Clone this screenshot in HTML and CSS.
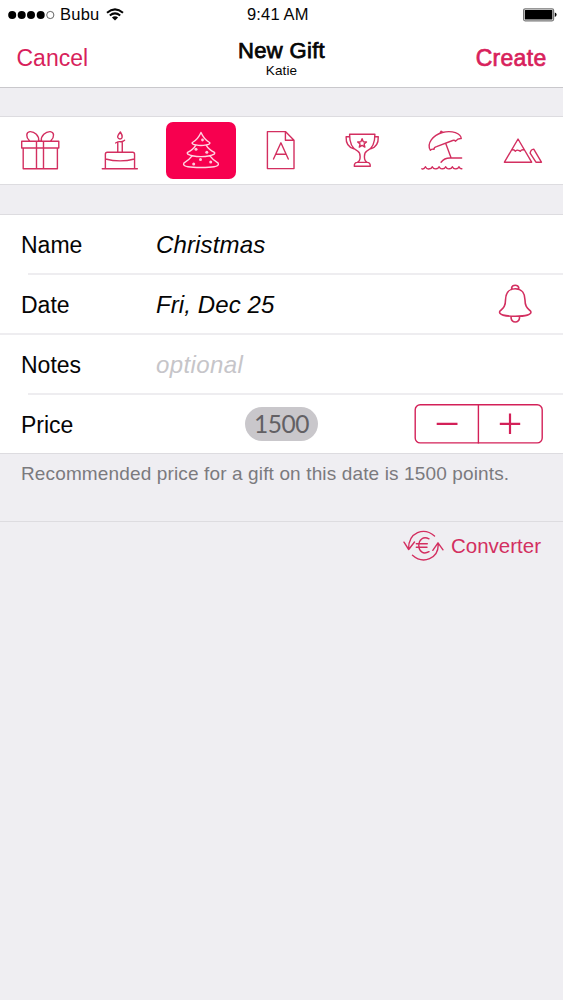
FILE: index.html
```html
<!DOCTYPE html>
<html lang="en">
<head>
<meta charset="utf-8">
<title>New Gift</title>
<link rel="stylesheet" href="styles.css">
</head>
<body>
<div class="screen">
  <header class="top">
    <div class="status">
      <div class="carrier">
        <svg class="signal" width="48" height="12" viewBox="0 0 48 12"><circle cx="4.2" cy="6" r="4"/><circle cx="13.7" cy="6" r="4"/><circle cx="23" cy="6" r="4"/><circle cx="32.7" cy="6" r="4"/><circle class="empty" cx="42.3" cy="6" r="3.6"/></svg>
        <span class="carrier-name">Bubu</span>
        <svg class="wifi" width="18" height="13" viewBox="0 0 18 13"><path d="M1 4.8Q9-2 17 4.8M3.8 7.6Q9 3.2 14.2 7.6"/><path class="solid" d="M5.9 9.4Q9 7 12.1 9.4L9 12.4Z"/></svg>
      </div>
      <span class="clock">9:41 AM</span>
      <svg class="battery" width="34" height="14" viewBox="0 0 34 14"><rect class="shell" x=".6" y=".8" width="30" height="12" rx="1.5"/><rect x="1.8" y="2" width="27.6" height="9.6" rx=".5"/><path d="M31.8 4.6Q33.6 5.2 33.6 6.8T31.8 9Z"/></svg>
    </div>
    <nav class="nav">
      <span class="cancel">Cancel</span>
      <div class="titles"><h1>New Gift</h1><p>Katie</p></div>
      <span class="create">Create</span>
    </nav>
  </header>

  <section class="kinds">
    <div class="kind"><svg class="icon" viewBox="0 117 80.43 67"><path d="M21.7 141.3H58.8V148H21.7ZM23.2 148V168.7H57.4V148M36.5 141.3V168.7M43.5 141.3V168.7M38.6 141C39.5 136 34.5 131.4 30 131.6C26 132 25.6 137 29.5 140.8M41.4 141C40.5 136 45.8 131.4 50.2 131.6C54.3 132 54.8 137 50.8 140.8M38.2 141H42"/></svg></div>
    <div class="kind"><svg class="icon" viewBox="80.43 117 80.43 67"><path d="M102.7 168.7H137.8M105.8 168.5V154.2Q105.8 152.3 107.8 152.3H133Q135 152.3 135 154.2V168.5M106 159Q120.4 162.8 135 159M118.2 152V142.5M122.7 152V141.3M116 143Q119 141.3 121 141.7T125 140.2M120.8 132Q117.6 136 118.2 137.4C118.8 139.6 122.3 139.6 122.6 137.2Q122.8 135 120.8 132Z"/></svg></div>
    <div class="kind"><div class="chosen"><svg class="icon" viewBox="166 122.5 70 57"><path d="M201 133C199.7 136 196 141 192.4 143C191.5 144 193 145.2 196 145.4C194 149 191 151.2 187.6 152.8C186.3 154.3 189.3 155.8 192.3 156.2C190 159.5 187 161.7 183.8 163.7C182 167.6 191 168 201 168S220 167.6 218.2 163.7C215 161.7 212 159.5 209.7 156.2C212.7 155.8 215.7 154.3 214.4 152.8C211 151.2 208 149 206 145.4C209 145.2 210.5 144 209.6 143C206 141 202.3 136 201 133ZM196 145.4Q201 146.5 206 145.4M192.3 156.2Q201 158 209.7 156.2"/><g class="bauble"><circle cx="202.5" cy="140.5" r="1.4"/><circle cx="196" cy="149.8" r="1.5"/><circle cx="206.8" cy="152.8" r="1.5"/><circle cx="200.5" cy="160" r="1.5"/><circle cx="193.7" cy="164.4" r="1.5"/><circle cx="210.7" cy="162.6" r="1.5"/></g></svg></div></div>
    <div class="kind"><svg class="icon" viewBox="241.29 117 80.43 67"><path d="M267.7 131.6H285.7L294.3 140.3V168.6H267.7ZM285.7 131.6V140.3H294.3M273.8 159L281.2 142.8L288.6 159M276 154.3H286.4"/></svg></div>
    <div class="kind"><svg class="icon" viewBox="321.72 117 80.43 67"><path d="M349.3 134.3H374.6Q374.8 147.5 366.5 151.2C363.5 153 363 160.7 367 162.4C369.5 162.5 370 163.5 370 166.2H354C354 163.5 354.5 162.5 357 162.4C361 160.7 360.5 153 357.4 151.2Q349.1 147.5 349.3 134.3ZM357 162.4H367M349.3 136.7H345.8Q345.5 146.8 353.6 148.7M374.6 136.7H378Q378.3 146.8 370.4 148.7M361.8 138.7L363 141.7L366.2 141.9L363.8 144L364.6 147.1L361.8 145.4L359 147.1L359.8 144L357.4 141.9L360.6 141.7Z"/></svg></div>
    <div class="kind"><svg class="icon" viewBox="402.15 117 80.43 67"><path d="M430.5 150.2C426.5 144 433 135 442.5 132.5C452.5 130 461 133.5 461.4 138.5Q458 138.2 455.8 141.2Q454.5 139.5 451.5 141L436.7 146.6Q434 147.1 434.2 149.3Q432.3 148.6 430.5 150.2ZM440.4 132.7L441.3 131.2L442.6 132.1M446 143.8L451.2 157.8M441.2 162.2Q444.5 158 450 158H461.8M422 168.8Q424.3 169.5 425.6 166.7Q427 169.5 429.5 168.8Q431.5 168.9 432.4 166.7Q433.8 169.4 436.2 168.8Q438.2 168.9 439.2 166.7Q440.6 169.4 442.8 168.8Q444.8 168.9 445.8 166.7Q447.2 169.4 449.5 168.8Q451.5 168.9 452.5 166.7Q453.8 169.4 456.2 168.8Q458.2 168.9 459.1 166.7Q460.2 169 462 168.8"/></svg></div>
    <div class="kind"><svg class="icon" viewBox="482.57 117 80.43 67"><path d="M504 162.2L517.6 139L531.2 162.2ZM511.3 150Q513.8 149.2 514.8 151.3Q516.2 150 517.5 150.2Q519.2 150.4 519.8 151.3Q521 149.3 524 150M529.7 153.2Q530.3 149.4 533.3 149.1L541 162.2H535.5Z"/></svg></div>
  </section>

  <main class="form">
    <div class="row"><label>Name</label><span class="value name">Christmas</span></div>
    <div class="row inset"><label>Date</label><span class="value date">Fri, Dec 25</span>
      <svg class="icon bell" width="36" height="42" viewBox="497 284 36 42"><path d="M511.7 290.5V288.5Q512.2 286.2 515.2 286.2T518.7 288.5V290.5M515.2 289.8C508 289.8 505.5 295.5 505.5 301C505.5 308.5 502.5 309.5 499.8 312.3C498.3 315.8 505 317.3 515.2 317.3S532.2 315.8 530.7 312.3C528 309.5 525 308.5 525 301C525 295.5 522.4 289.8 515.2 289.8ZM511.1 317.5V319.2Q511.6 323 515.3 323T519.5 319.2V317.5"/></svg></div>
    <div class="row"><label>Notes</label><span class="value placeholder">optional</span></div>
    <div class="row inset"><label>Price</label><span class="pill">1500</span>
      <svg class="icon stepper" width="130" height="41" viewBox="414 404 130 41"><rect x="415.2" y="404.7" width="127" height="38.2" rx="5"/><path d="M478.4 404.7V442.9"/><path class="sign" d="M436.7 423.8H457.5M499.8 423.8H520.2M510 413.6V434"/></svg></div>
  </main>
  <p class="hint">Recommended price for a gift on this date is 1500 points.</p>
  <div class="converter">
    <svg class="icon" width="42" height="34" viewBox="403 529 42 34"><path d="M434.5 536C424 526.8 408.5 532 408.5 549.2M404 542.2L408.7 549.5L414.5 542M412.5 555.2C423 564.5 439 559 438.2 543.5M432.8 550.3L438 542.8L443 549.8M429 538.8C423 535.8 418.8 540 418.8 545.5S423 555 429 551.7M416.3 543.7H427.3M416.3 547.2H427"/></svg>
    <span>Converter</span>
  </div>
</div>
</body>
</html>
```
FILE: styles.css
```css
* { box-sizing: border-box; }
body { margin: 0; background: #efeef2; color: #050505; font-family: "Liberation Sans", Arial, sans-serif; }
.screen { width: 563px; height: 1000px; overflow: hidden; }
h1, p { margin: 0; }
svg { display: block; flex: none; }

.top { height: 88px; background: #fff; border-bottom: 1px solid #c9c8cc; }
.status { height: 29px; display: grid; grid-template-columns: 239px auto 1fr; align-items: center; padding: 0 6px 0 8px; }
.carrier { display: flex; align-items: center; }
.signal .empty { fill: none; stroke: #555; stroke-width: .9; }
.carrier-name { margin-left: 4px; width: 39px; font-size: 16.5px; letter-spacing: .25px; }
.wifi { margin-left: 7px; fill: none; stroke: #050505; stroke-width: 2; }
.wifi .solid { fill: #050505; stroke: none; }
.clock { font-size: 16.5px; letter-spacing: .15px; }
.battery { justify-self: end; }
.battery .shell { fill: #fff; stroke: #777; stroke-width: 1.2; }
.nav { height: 58px; display: grid; grid-template-columns: 1fr auto 1fr; align-items: center; padding: 0 16.5px; color: #d81f5c; font-size: 23px; }
.titles { text-align: center; color: #050505; padding-bottom: 1px; }
.titles h1 { font-size: 22px; line-height: 25px; font-weight: 400; -webkit-text-stroke: .75px; letter-spacing: .35px; }
.titles p { font-size: 13.5px; line-height: 15px; letter-spacing: .1px; }
.create { justify-self: end; -webkit-text-stroke: .7px; letter-spacing: .3px; }

.icon { fill: none; stroke: #d32f60; stroke-width: 1.4; stroke-linecap: round; stroke-linejoin: round; }
.kinds { height: 69px; margin-top: 28px; display: grid; grid-template-columns: repeat(7, 1fr); background: #fff; border: solid #dddce0; border-width: 1px 0; }
.kind { display: flex; align-items: center; justify-content: center; min-width: 0; }
.kind > .icon { width: 100%; height: 67px; }
.chosen { width: 70px; height: 57px; border-radius: 7px; background: #f7004f; }
.chosen .icon { width: 70px; height: 57px; stroke: #ffd5e2; }
.chosen .bauble { fill: #ffc9da; stroke: none; }

.form { margin-top: 29px; background: #fff; border: solid #dddce0; border-width: 1px 0; }
.row { height: 60px; display: flex; align-items: center; padding: 2px 20px 0 21px; font-size: 23px; }
.row:first-child { height: 58px; }
.row + .row { border-top: 2px solid #eeedf0; }
.row.inset { border-top: 0; padding-top: 4px; background: linear-gradient(#eeedf0, #eeedf0) 28px 0 / 100% 2px no-repeat; }
.row label { width: 135px; }
.value { font-style: italic; font-size: 24px; }
.name { letter-spacing: .15px; }
.date { letter-spacing: .1px; }
.placeholder { color: #c6c5c9; letter-spacing: .4px; }
.bell { margin: -2px 10px 0 auto; stroke-width: 1.6; }
.pill { width: 73px; height: 34px; margin: -2px 0 0 89px; border-radius: 17px; background: #c9c7cb; color: #626064; text-align: center; font: 24.5px/33px Lato, sans-serif; letter-spacing: -.4px; }
.row .stepper { margin: -1px -1px 0 auto; stroke: #d32058; stroke-width: 1.4; }
.stepper .sign { stroke-width: 2.2; stroke-linecap: butt; }
.hint { height: 68px; border-bottom: 1px solid #dddce0; padding: 8px 21px 0; color: #7b7a7e; font-size: 19px; letter-spacing: .135px; line-height: 23px; white-space: nowrap; }
.converter { height: 48px; display: flex; align-items: center; justify-content: flex-end; gap: 6px; padding-right: 22px; color: #d32f60; font-size: 20.5px; }
```
